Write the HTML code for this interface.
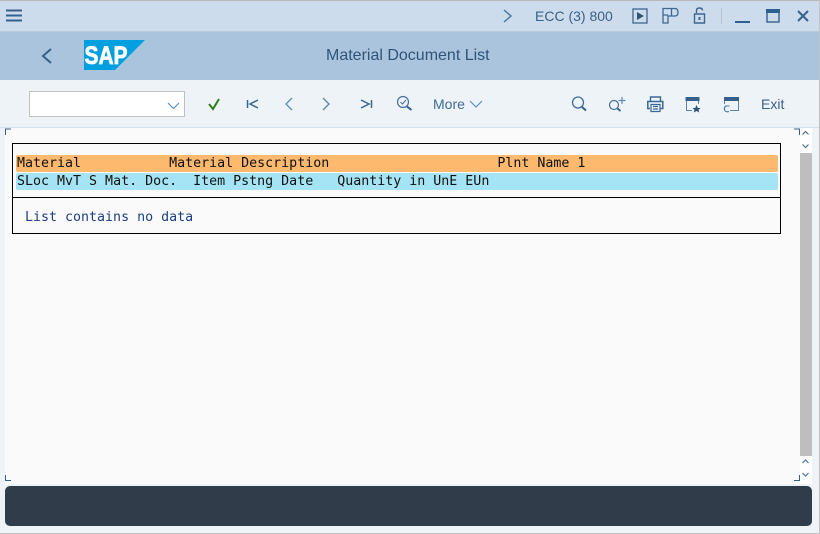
<!DOCTYPE html>
<html><head><meta charset="utf-8">
<style>
html,body{margin:0;padding:0}
body{width:820px;height:534px;position:relative;overflow:hidden;background:#eef3f8;font-family:"Liberation Sans",sans-serif}
.a{position:absolute}
.t{position:absolute;white-space:pre;line-height:16px}
.m{font-family:"DejaVu Sans Mono",monospace;font-size:13.3px;color:#111}
svg{position:absolute;left:0;top:0}
</style></head><body>
<div class="a" style="left:0;top:0;width:820px;height:1px;background:#b8b8b8"></div>
<div class="a" style="left:0;top:1px;width:820px;height:30px;background:#cddcec"></div>
<div class="a" style="left:0;top:31px;width:820px;height:1px;background:#b9c9d9"></div>
<div class="a" style="left:0;top:32px;width:820px;height:48px;background:#a9c4dc"></div>
<div class="a" style="left:0;top:127px;width:820px;height:1px;background:#d3e0ee"></div>
<div class="a" style="left:5px;top:128px;width:795px;height:356px;background:#fafafa"></div>
<div class="a" style="left:800px;top:128px;width:12px;height:356px;background:#fff"></div>
<div class="a" style="left:800px;top:153px;width:12px;height:303px;background:#bebebe"></div>
<div class="a" style="left:5px;top:486px;width:807px;height:40px;background:#303c49;border-radius:5px"></div>
<div class="a" style="left:0;top:533px;width:820px;height:1px;background:#c4c4c4"></div>
<div class="a" style="left:819px;top:0;width:1px;height:534px;background:#c4c4c4"></div>

<div class="a" style="left:29px;top:91px;width:154px;height:24px;background:#fff;border:1px solid #bfbfbf"></div>

<div class="t" style="left:535px;top:8px;font-size:14px;color:#3c5f85">ECC (3) 800</div>
<div class="t" style="left:326px;top:48px;font-size:16px;color:#2f5478">Material Document List</div>
<div class="t" style="left:433px;top:96px;font-size:14px;color:#3f6b96">More</div>
<div class="t" style="left:761px;top:96px;font-size:14px;color:#3c5f85">Exit</div>

<svg width="820" height="534" fill="none" stroke-linecap="butt">
<!-- hamburger -->
<path d="M6 10.500H22M6 15.500H22M6 20.500H22" stroke="#35608c" stroke-width="2"/>
<!-- back -->
<path d="M51 49L43 56L51 63" stroke="#34608c" stroke-width="2"/>
<!-- SAP logo -->
<path d="M84 40H145L115 70H84Z" fill="#009fdf"/>
<text x="84.500" y="64" font-family="Liberation Sans" font-weight="700" font-size="25" textLength="43" lengthAdjust="spacingAndGlyphs" fill="#fff" stroke="#fff" stroke-width="0.800">SAP</text>
<!-- dropdown chevron -->
<path d="M168 103L173.500 108.500L179 103" stroke="#5b8fc0" stroke-width="1.200"/>
<!-- top right -->
<path d="M504 10L511 16L504 22" stroke="#47729b" stroke-width="1.400"/>
<rect x="633" y="9" width="14" height="14" stroke="#3d6790" stroke-width="1.300"/>
<path d="M637 12L644 16L637 20Z" fill="#2f5478"/>
<path d="M663 8.500H671.500V16H668V23H663ZM671.500 8.500H675Q678 8.500 678 12.500Q678 16 675 16H671.500M663 15H668" stroke="#3d6790" stroke-width="1.300"/>
<path d="M696.500 13V10.500Q696.500 8 699.500 8Q702.500 8 702.500 10.500M694.500 14H704.500V23H694.500Z" stroke="#3d6790" stroke-width="1.400"/>
<rect x="698.500" y="17" width="2" height="3" fill="#3d6790"/>
<path d="M721.500 8V24" stroke="#b2c3d3" stroke-width="1"/>
<path d="M735 22H750" stroke="#2f6090" stroke-width="2"/>
<rect x="767" y="10" width="12" height="12" stroke="#35608c" stroke-width="1.400"/>
<rect x="766" y="9" width="14" height="4" fill="#2f6090"/>
<path d="M798 11L808 21M808 11L798 21" stroke="#34608c" stroke-width="2"/>
<!-- toolbar -->
<path d="M209 104L213 109L219 99" stroke="#2f7d1c" stroke-width="2"/>
<path d="M247.500 100V108M258 100L250 104L258 108" stroke="#3a6794" stroke-width="1.500"/>
<path d="M292 98L286 104L292 110" stroke="#5e8ab5" stroke-width="1.300"/>
<path d="M323 98L329 104L323 110" stroke="#5e7fa8" stroke-width="1.300"/>
<path d="M361 100L369 104L361 108M371.500 100V108" stroke="#3a6794" stroke-width="1.500"/>
<circle cx="403" cy="102" r="5.500" stroke="#44709b" stroke-width="1.200"/>
<path d="M400.500 102L402.500 104L406 100" stroke="#44709b" stroke-width="1"/>
<path d="M407 106.500L411.500 110" stroke="#34608c" stroke-width="2"/>
<path d="M470 101L476 107L482 101" stroke="#5b8fc0" stroke-width="1.200"/>
<circle cx="578" cy="102.500" r="5.500" stroke="#44709b" stroke-width="1.300"/>
<path d="M582 107L586 110.500" stroke="#34608c" stroke-width="2"/>
<circle cx="614" cy="105" r="4.500" stroke="#44709b" stroke-width="1.200"/>
<path d="M617.500 108.500L620.500 111" stroke="#34608c" stroke-width="1.800"/>
<path d="M622 97V104M618.500 100.500H625.500" stroke="#5e8ab5" stroke-width="1.200"/>
<path d="M650.500 101V97H660.500V101" stroke="#3a6794" stroke-width="1.400"/>
<path d="M650 108.500H647.800V101.500H662.800V108.500H660.500" stroke="#3a6794" stroke-width="1.500"/>
<path d="M651 104.500H660V111.500H651ZM653 106.500H658M653 109H658" stroke="#3a6794" stroke-width="1.200"/>
<path d="M686.500 101V110.500H692M698.500 101V104" stroke="#5c84ab" stroke-width="1"/>
<rect x="685.500" y="97" width="14" height="4" fill="#35608c"/>
<path d="M696.500 105L697.800 108H700.500L698.500 110L699.300 112.500L696.500 111L693.700 112.500L694.500 110L692.500 108H695.200Z" fill="#2f5478"/>
<path d="M730 110.500H738.500V98" stroke="#5c84ab" stroke-width="1"/>
<path d="M724.500 101V104" stroke="#5c84ab" stroke-width="1"/>
<rect x="724" y="97" width="15" height="4" fill="#35608c"/>
<path d="M729.500 106H725.500Q724 108 724.500 110Q726 112.500 729 111.500" stroke="#3d7ab0" stroke-width="1.100"/>
<!-- corners -->
<path d="M11 129H5.500V135" stroke="#35608c" stroke-width="1"/>
<path d="M794 129H799.500V135" stroke="#35608c" stroke-width="1"/>
<path d="M5.500 475V480.500H11" stroke="#35608c" stroke-width="1"/>
<path d="M794 480.500H799.500V475" stroke="#35608c" stroke-width="1"/>
<!-- scroll arrows -->
<path d="M802.500 134.500L805.500 131.500L808.500 134.500" stroke="#47729b" stroke-width="1.200"/>
<path d="M802.500 144.500L805.500 147.500L808.500 144.500" stroke="#47729b" stroke-width="1.200"/>
<path d="M802.500 463L805.500 460L808.500 463" stroke="#47729b" stroke-width="1.200"/>
<path d="M802.500 473L805.500 476L808.500 473" stroke="#47729b" stroke-width="1.200"/>
</svg>

<!-- list box -->
<div class="a" style="left:12px;top:143px;width:767px;height:89px;border:1px solid #000"></div>
<div class="a" style="left:12px;top:197px;width:768px;height:1px;background:#000"></div>
<div class="a" style="left:16px;top:155px;width:762px;height:17px;background:#fdb96e;border-radius:2px"></div>
<div class="a" style="left:16px;top:173px;width:762px;height:17px;background:#a4e4f4;border-radius:2px"></div>
<div class="t m" style="left:17px;top:156px">Material           Material Description                     Plnt Name 1</div>
<div class="t m" style="left:17px;top:174px">SLoc MvT S Mat. Doc.  Item Pstng Date   Quantity in UnE EUn</div>
<div class="t m" style="left:25px;top:210px;color:#1c3f85">List contains no data</div>
</body></html>
